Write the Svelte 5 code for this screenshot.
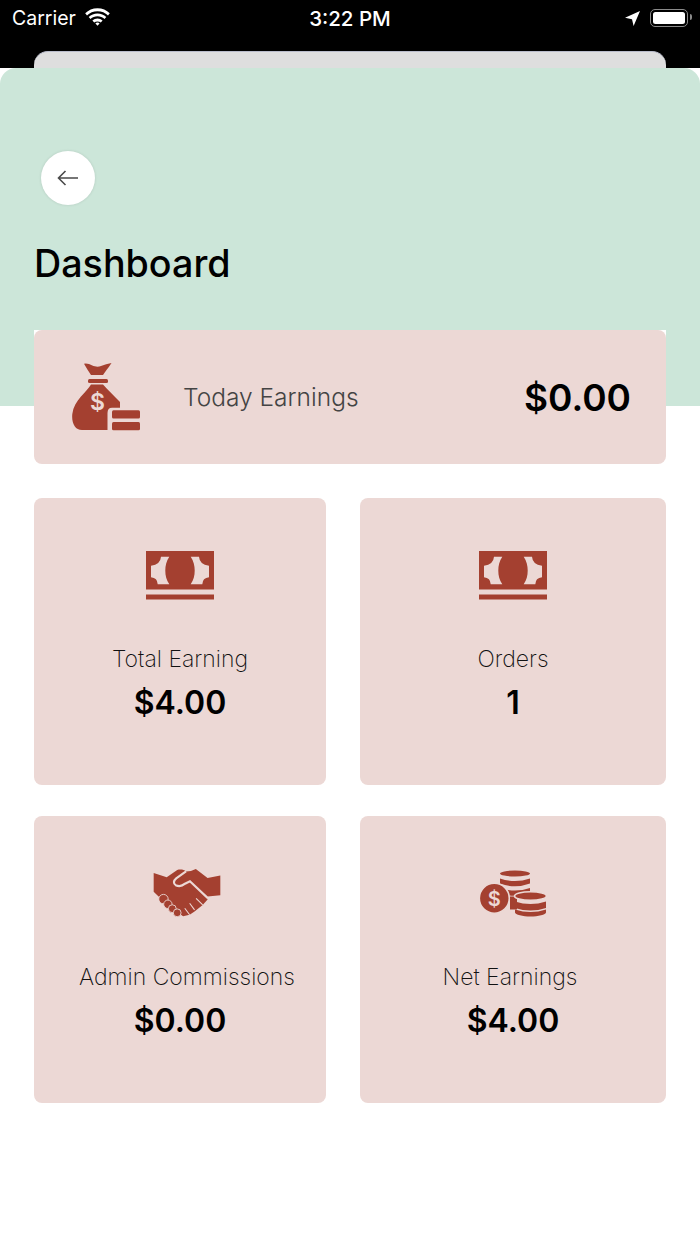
<script>
  const money = [
    { label: 'Total Earning', value: '$4.00' },
    { label: 'Orders', value: '1' },
  ];
</script>

{#snippet moneyIcon()}
  <svg class="icon" width="68" height="49" viewBox="0 0 68 49">
    <rect width="68" height="38.5" fill="#a44030" />
    <rect y="43.5" width="68" height="5" fill="#a44030" />
    <path d="M15 5.7H23.3C20.4 10 19.3 14.5 19.3 19.5C19.3 24.5 20.4 29 23.3 33.3H11.7Q11.500 27 5 26.300V14.700Q14.500 13.500 15 5.700Z" fill="#ecd8d5" />
    <path d="M53 5.7H44.7C47.6 10 48.7 14.5 48.7 19.5C48.7 24.5 47.6 29 44.7 33.3H56.3Q56.500 27 63 26.300V14.700Q53.500 13.500 53 5.700Z" fill="#ecd8d5" />
  </svg>
{/snippet}

<div class="page">
  <div class="status">
    <div class="status-left">
      <span>Carrier</span>
      <svg width="25" height="18" viewBox="0 0 25 18" fill="#fff">
        <path d="M12.5 3.2C16.6 3.2 20.3 4.8 23 7.4L24.8 5.3C21.6 2.2 17.3.3 12.5.3S3.4 2.2.2 5.3L2 7.4C4.7 4.8 8.4 3.2 12.5 3.2Z" />
        <path d="M12.5 8.2C15.2 8.2 17.6 9.2 19.5 11L21.3 9C18.9 6.8 15.9 5.4 12.5 5.4S6.1 6.8 3.7 9L5.5 11C7.4 9.2 9.8 8.2 12.5 8.2Z" />
        <path d="M12.5 10.6C10.6 10.6 8.8 11.3 7.4 12.6L9.2 14.6C10.1 13.8 11.2 13.4 12.5 13.4S14.9 13.8 15.8 14.6L17.6 12.6C16.2 11.3 14.4 10.6 12.5 10.6Z" />
        <path d="M12.5 14.6C11.7 14.6 11 14.9 10.4 15.4L12.5 17.8L14.6 15.4C14 14.9 13.3 14.6 12.5 14.6Z" />
      </svg>
    </div>
    <span class="time">3:22 PM</span>
    <div class="status-right">
      <svg width="15" height="15" viewBox="0 0 15 15" fill="#fff">
        <path d="M15 0L8.6 15L7 8.2L0 6.8Z" />
      </svg>
      <div class="battery"><div class="battery-fill"></div></div>
    </div>
  </div>

  <div class="sheet"></div>

  <div class="hero">
    <button class="back" aria-label="Back">
      <svg width="22" height="16" viewBox="0 0 22 16" fill="none" stroke="#4a4a4a" stroke-width="1.6">
        <path d="M21 8H1.5M8.5 1L1.5 8L8.5 15" />
      </svg>
    </button>
    <h1>Dashboard</h1>
  </div>

  <div class="content">
    <div class="today-wrap">
      <div class="today">
        <svg class="bag" width="68" height="68" viewBox="0 0 68 68" fill="#a44030">
          <path d="M12 .7Q14 0 17 1Q24 5 29 3Q34 1 39.500 0Q37 4 34.500 7L31 12H19L15.700 7Z" />
          <rect x="16" y="16" width="20" height="4" rx="1.5" />
          <path d="M19 21.5C15 29 2 37 .3 51C-.6 60 3 67 10 67H35.5V50C35.5 46.5 37 44.7 40 44.7H48V39C42 33 36 27 31 21.5Z" />
          <rect x="40" y="47.3" width="28" height="8.2" rx="1.5" />
          <rect x="40" y="59" width="28" height="8.2" rx="1.5" />
          <text x="25.5" y="47" class="dollar big">$</text>
        </svg>
        <span class="today-label">Today Earnings</span>
        <span class="today-value">$0.00</span>
      </div>
    </div>

    <div class="grid">
      {#each money as item}
        <div class="card">
          {@render moneyIcon()}
          <span class="label">{item.label}</span>
          <span class="value">{item.value}</span>
        </div>
      {/each}

      <div class="card">
        <svg class="icon shift-right" width="68" height="50" viewBox="0 0 68 50" fill="#a44030">
          <path d="M0 4L13.3 8.3L24 1C27 .2 31 .5 33 2.5L38 2L43 0L55 9.3L68 6.7V26.7L55 28V31L50 36.700L41.700 43.300L36.700 46.700L30 48.300L24 44L14 34L5 28L0 23.3Z" />
          <path d="M33 2.5L23 9.500C20 12 20 15 22.500 16.500C25.500 18 29 17.500 32 15L37 12.500L55.500 30" fill="none" stroke="#ecd8d5" stroke-width="2.2" />
          <g stroke="#ecd8d5" stroke-width="0.9">
            <circle cx="10" cy="30.700" r="4.800" />
            <circle cx="14.500" cy="36" r="4.300" />
            <circle cx="19" cy="40.500" r="4" />
            <circle cx="24" cy="44.700" r="4" />
          </g>
          <path d="M36.700 35L41.700 41.700M43.300 30L50 36.700M31.700 40L36.700 46.700" fill="none" stroke="#ecd8d5" stroke-width="1.1" />
        </svg>
        <span class="label shift-right">Admin Commissions</span>
        <span class="value">$0.00</span>
      </div>

      <div class="card">
        <svg class="icon" width="67" height="46" viewBox="0 0 67 46" fill="#a44030">
          <ellipse cx="35" cy="3" rx="15" ry="3" />
          <path d="M20 8Q35 13 50 8V13Q35 18.500 20 13Z" />
          <path d="M20 17.500Q35 22.500 50 17.500V22.500Q35 28 20 22.500Z" />
          <path d="M30 26H37V39H30Z" />
          <g stroke="#ecd8d5" stroke-width="1.6">
            <ellipse cx="50.500" cy="25.500" rx="16" ry="4.300" />
            <path d="M35 31Q50.500 36 66 31V37.500Q50.500 42.500 35 37.500Z" stroke="none" />
            <path d="M35 39Q50.500 44 66 39V42C66 44 58 46 50.500 46S35 44 35 42Z" stroke="none" />
            <circle cx="14.300" cy="27.700" r="15" />
          </g>
          <text x="14.300" y="35" class="dollar coin">$</text>
        </svg>
        <span class="label shift-left">Net Earnings</span>
        <span class="value">$4.00</span>
      </div>
    </div>
  </div>
</div>

<style>
  :global(body) {
    background: #fff;
    font-family: Inter, 'Noto Sans', sans-serif;
  }

  .page {
    width: 700px;
    height: 1244px;
    overflow: hidden;
    background: linear-gradient(#000 0 68px, #fff 68px);
  }

  .status {
    height: 36px;
    padding: 0 12px;
    display: grid;
    grid-template-columns: 1fr auto 1fr;
    align-items: center;
    color: #fff;
    font-size: 19.5px;
  }

  .status-left {
    display: flex;
    align-items: center;
    gap: 9px;
  }

  .status-left svg {
    margin-top: -2px;
  }

  .time {
    font-weight: 500;
    font-size: 20.5px;
  }

  .status-right {
    display: flex;
    justify-content: flex-end;
    align-items: center;
    gap: 10px;
  }

  .battery {
    width: 32px;
    height: 12px;
    padding: 2px;
    border: 1px solid #8a8a8a;
    border-radius: 5px;
    position: relative;
  }

  .battery::after {
    content: '';
    position: absolute;
    top: 4px;
    right: -5px;
    width: 2px;
    height: 6px;
    border-radius: 0 2px 2px 0;
    background: #8a8a8a;
  }

  .battery-fill {
    height: 100%;
    background: #fff;
    border-radius: 2.5px;
  }

  .sheet {
    height: 17px;
    margin: 15px 34px 0;
    background: #dedede;
    border-top: 1px solid #b9bccb;
    box-sizing: border-box;
    border-radius: 14px 14px 0 0;
  }

  .hero {
    height: 338px;
    box-sizing: border-box;
    padding: 83px 34px 0;
    background: #cce6d9;
    border-radius: 16px 16px 0 0;
  }

  .back {
    width: 54px;
    height: 54px;
    margin-left: 7px;
    padding: 0;
    display: flex;
    align-items: center;
    justify-content: center;
    border: none;
    border-radius: 50%;
    background: #fff;
    box-shadow: 0 0 3px rgba(0, 0, 0, 0.12);
  }

  h1 {
    margin: 35px 0 0;
    font-size: 37.7px;
    line-height: 46px;
    font-weight: 500;
    color: #000;
  }

  .content {
    margin-top: -76px;
    padding: 0 34px;
  }

  .today-wrap {
    background: #fff;
    border-radius: 0 0 10px 10px;
  }

  .today {
    height: 134px;
    box-sizing: border-box;
    padding: 0 35px 0 38px;
    display: flex;
    align-items: center;
    background: #ecd8d5;
    border-radius: 8px;
  }

  .today-label {
    margin-left: 43px;
    flex: 1;
    font-size: 24.5px;
    font-weight: 300;
    color: #444;
  }

  .today-value {
    font-size: 37px;
    font-weight: 600;
    color: #000;
  }

  .grid {
    margin-top: 34px;
    display: grid;
    grid-template-columns: 292px 306px;
    grid-auto-rows: 287px;
    column-gap: 34px;
    row-gap: 31px;
  }

  .card {
    display: flex;
    flex-direction: column;
    align-items: center;
    padding-top: 53px;
    box-sizing: border-box;
    background: #ecd8d5;
    border-radius: 8px;
  }

  .icon {
    display: block;
    height: 49px;
  }

  .label {
    margin-top: 45px;
    font-size: 23px;
    line-height: 28px;
    font-weight: 200;
    color: #111;
    white-space: nowrap;
  }

  .value {
    margin-top: 9px;
    font-size: 32px;
    line-height: 42px;
    font-weight: 600;
    color: #000;
  }

  .shift-right {
    margin-left: 14px;
  }

  .shift-left {
    margin-right: 6px;
  }

  .dollar {
    fill: #ecd8d5;
    stroke: none;
    font-weight: 600;
    text-anchor: middle;
  }

  .dollar.big {
    font-size: 23px;
  }

  .dollar.coin {
    font-size: 20px;
  }
</style>
